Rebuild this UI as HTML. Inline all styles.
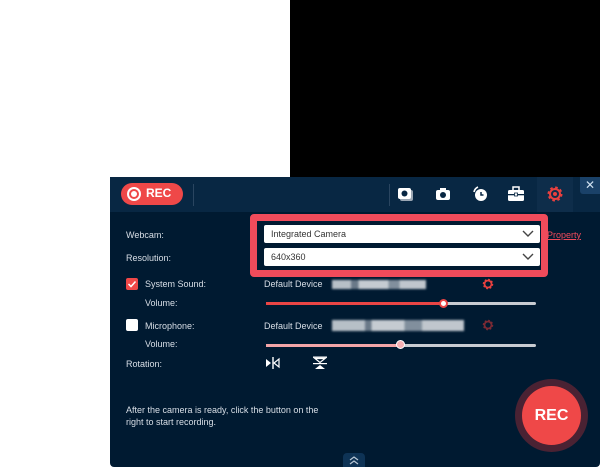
<!DOCTYPE html>
<html><head><style>
*{margin:0;padding:0;box-sizing:border-box}
body{width:600px;height:469px;background:#fff;position:relative;overflow:hidden;font-family:"Liberation Sans",sans-serif;font-size:9px;color:#d5dde6}
.a{position:absolute}
#blk{left:290px;top:0;width:310px;height:177px;background:#000}
#panel{left:110px;top:177px;width:490px;height:290px;background:#001a31;border-radius:0 0 4px 4px}
#hdr{left:110px;top:177px;width:490px;height:35px;background:#082743}
.lbl{font-size:9px;color:#d8dfe7}
.dd{background:#fff;border-radius:2px;height:18px;color:#333;font-size:9px;padding:4px 7px}
.chev{position:absolute;right:6px;top:4px}
.track{height:3px;background:#c8ccd2;border-radius:2px}
.blur{filter:blur(1px);opacity:.85}
</style></head><body>
<div class="a" id="blk"></div>
<div class="a" id="panel"></div>
<div class="a" id="hdr"></div>
<div class="a" style="left:121px;top:183px;width:62px;height:22px;background:#ef4848;border-radius:11px"></div>
<div class="a" style="left:127px;top:187px;width:14px;height:14px;border:2px solid #fff;border-radius:50%"></div>
<div class="a" style="left:131px;top:191px;width:6px;height:6px;background:#fff;border-radius:50%"></div>
<div class="a" style="left:146px;top:186px;color:#fff;font-weight:bold;font-size:12px">REC</div>
<div class="a" style="left:193px;top:184px;width:1px;height:22px;background:#2a4560"></div>
<div class="a" style="left:389px;top:184px;width:1px;height:22px;background:#2a4560"></div>
<svg class="a" style="left:396px;top:184px" width="20" height="20" viewBox="0 0 20 20"><rect x="4" y="6" width="13" height="11" rx="2" fill="#9aa6b3"/><rect x="2" y="4" width="13" height="11" rx="2" fill="#fff"/><circle cx="8.5" cy="9.5" r="3" fill="#082743"/></svg>
<svg class="a" style="left:433px;top:184px" width="20" height="20" viewBox="0 0 20 20"><rect x="3" y="6" width="14" height="10" rx="2" fill="#fff"/><rect x="7" y="4" width="6" height="3" fill="#fff"/><circle cx="10" cy="11" r="3" fill="#082743"/></svg>
<svg class="a" style="left:470px;top:184px" width="20" height="20" viewBox="0 0 20 20"><circle cx="11" cy="11" r="6" fill="#fff"/><path d="M11 8v3h2.5" stroke="#082743" stroke-width="1.5" fill="none"/><path d="M4 8a7 7 0 0 1 4-5" stroke="#fff" stroke-width="1.6" fill="none"/></svg>
<svg class="a" style="left:506px;top:184px" width="20" height="20" viewBox="0 0 20 20"><rect x="2" y="6" width="16" height="11" rx="1.5" fill="#fff"/><rect x="7" y="3" width="6" height="4" fill="none" stroke="#fff" stroke-width="1.5"/><rect x="2" y="10" width="16" height="1.3" fill="#082743"/><rect x="8.5" y="9" width="3" height="3" fill="#fff" stroke="#082743" stroke-width="0.8"/></svg>
<div class="a" style="left:537px;top:177px;width:36px;height:35px;background:#0e2d4a"></div>
<svg class="a" style="left:545px;top:184px" width="20" height="20" viewBox="0 0 20 20"><circle cx="10" cy="10" r="6" fill="none" stroke="#e8403f" stroke-width="3" stroke-dasharray="2.4 2.3"/><circle cx="10" cy="10" r="5" fill="none" stroke="#e8403f" stroke-width="2"/><circle cx="10" cy="10" r="2" fill="#e8403f"/></svg>
<div class="a" style="left:580px;top:177px;width:20px;height:17px;background:#1a4168;border-radius:0 0 0 3px;color:#cfe0f0;font-size:12px;text-align:center;line-height:16px">✕</div>
<div class="a" style="left:250px;top:214px;width:298px;height:63px;border:7px solid #f04b5b;border-radius:4px;background:#001a31"></div>
<div class="a dd" style="left:264px;top:225px;width:276px">Integrated Camera<svg class="chev" width="12" height="10"><path d="M1 2l5 5 5-5" stroke="#444" stroke-width="1.4" fill="none"/></svg></div>
<div class="a dd" style="left:264px;top:248px;width:276px">640x360<svg class="chev" width="12" height="10"><path d="M1 2l5 5 5-5" stroke="#444" stroke-width="1.4" fill="none"/></svg></div>
<div class="a lbl" style="left:126px;top:230px">Webcam:</div>
<div class="a lbl" style="left:126px;top:253px">Resolution:</div>
<div class="a" style="left:547px;top:230px;color:#f04b5b;text-decoration:underline;font-size:9px">Property</div>
<div class="a" style="left:126px;top:278px;width:12px;height:12px;background:#ef4848;border-radius:2px"></div>
<svg class="a" style="left:127px;top:279px" width="10" height="10"><path d="M1.5 5l2.5 2.5 4.5-5" stroke="#fff" stroke-width="1.5" fill="none"/></svg>
<div class="a lbl" style="left:145px;top:279px">System Sound:</div>
<div class="a lbl" style="left:264px;top:279px">Default Device</div>
<div class="a blur" style="left:332px;top:280px;width:94px;height:9px;background:linear-gradient(90deg,#d8dde2 0 20%,#7d8a98 20% 28%,#e8ebee 28% 60%,#98a4b0 60% 72%,#e2e5e9 72%)"></div>
<svg class="a" style="left:481px;top:277px" width="14" height="14" viewBox="0 0 20 20"><circle cx="10" cy="10" r="6" fill="none" stroke="#e8403f" stroke-width="3" stroke-dasharray="2.4 2.3"/><circle cx="10" cy="10" r="5" fill="none" stroke="#e8403f" stroke-width="2.5"/></svg>
<div class="a lbl" style="left:145px;top:298px">Volume:</div>
<div class="a track" style="left:266px;top:302px;width:270px"></div>
<div class="a" style="left:266px;top:302px;width:178px;height:3px;background:#ea4545"></div>
<div class="a" style="left:439px;top:299px;width:9px;height:9px;border-radius:50%;background:#fff;border:2px solid #ea4545"></div>
<div class="a" style="left:126px;top:319px;width:12px;height:12px;background:#fff;border-radius:2px"></div>
<div class="a lbl" style="left:145px;top:321px">Microphone:</div>
<div class="a lbl" style="left:264px;top:321px">Default Device</div>
<div class="a blur" style="left:332px;top:320px;width:132px;height:11px;background:linear-gradient(90deg,#d8dde2 0 25%,#7d8a98 25% 30%,#e8ebee 30% 55%,#98a4b0 55% 68%,#e2e5e9 68%)"></div>
<svg class="a" style="left:481px;top:318px" width="14" height="14" viewBox="0 0 20 20"><circle cx="10" cy="10" r="6" fill="none" stroke="#7a2a34" stroke-width="3" stroke-dasharray="2.4 2.3"/><circle cx="10" cy="10" r="5" fill="none" stroke="#7a2a34" stroke-width="2.5"/></svg>
<div class="a lbl" style="left:145px;top:339px">Volume:</div>
<div class="a track" style="left:266px;top:344px;width:270px"></div>
<div class="a" style="left:266px;top:344px;width:135px;height:3px;background:#f2a5a8"></div>
<div class="a" style="left:396px;top:340px;width:9px;height:9px;border-radius:50%;background:#f6b0b3;border:1px solid #fff"></div>
<div class="a lbl" style="left:126px;top:359px">Rotation:</div>
<svg class="a" style="left:265px;top:356px" width="16" height="14"><path d="M1 3l5 4-5 4z" fill="#fff"/><rect x="7.3" y="1" width="1.4" height="12" fill="#fff"/><path d="M14 3l-5 4 5 4z" fill="none" stroke="#fff" stroke-width="1.2"/></svg>
<svg class="a" style="left:312px;top:356px" width="16" height="14"><rect x="1" y="0.5" width="14" height="1.4" fill="#fff"/><path d="M3 2.5l5 4 5-4z" fill="none" stroke="#fff" stroke-width="1.2"/><rect x="1" y="7" width="14" height="1.2" fill="#fff"/><path d="M3 13l5-4 5 4z" fill="#fff"/></svg>
<div class="a" style="left:126px;top:404px;font-size:9px;line-height:12px;color:#d8dfe7">After the camera is ready, click the button on the<br>right to start recording.</div>
<div class="a" style="left:515px;top:379px;width:73px;height:73px;border-radius:50%;background:#4a2233"></div>
<div class="a" style="left:522px;top:386px;width:59px;height:59px;border-radius:50%;background:#ef4848;color:#fff;font-weight:bold;font-size:16px;text-align:center;line-height:59px">REC</div>
<div class="a" style="left:343px;top:453px;width:22px;height:14px;background:#0e3355;border-radius:4px 4px 0 0"></div>
<svg class="a" style="left:349px;top:455px" width="10" height="10"><path d="M1 5l4-3 4 3M1 9l4-3 4 3" stroke="#b9c7d5" stroke-width="1.2" fill="none"/></svg>
</body></html>
